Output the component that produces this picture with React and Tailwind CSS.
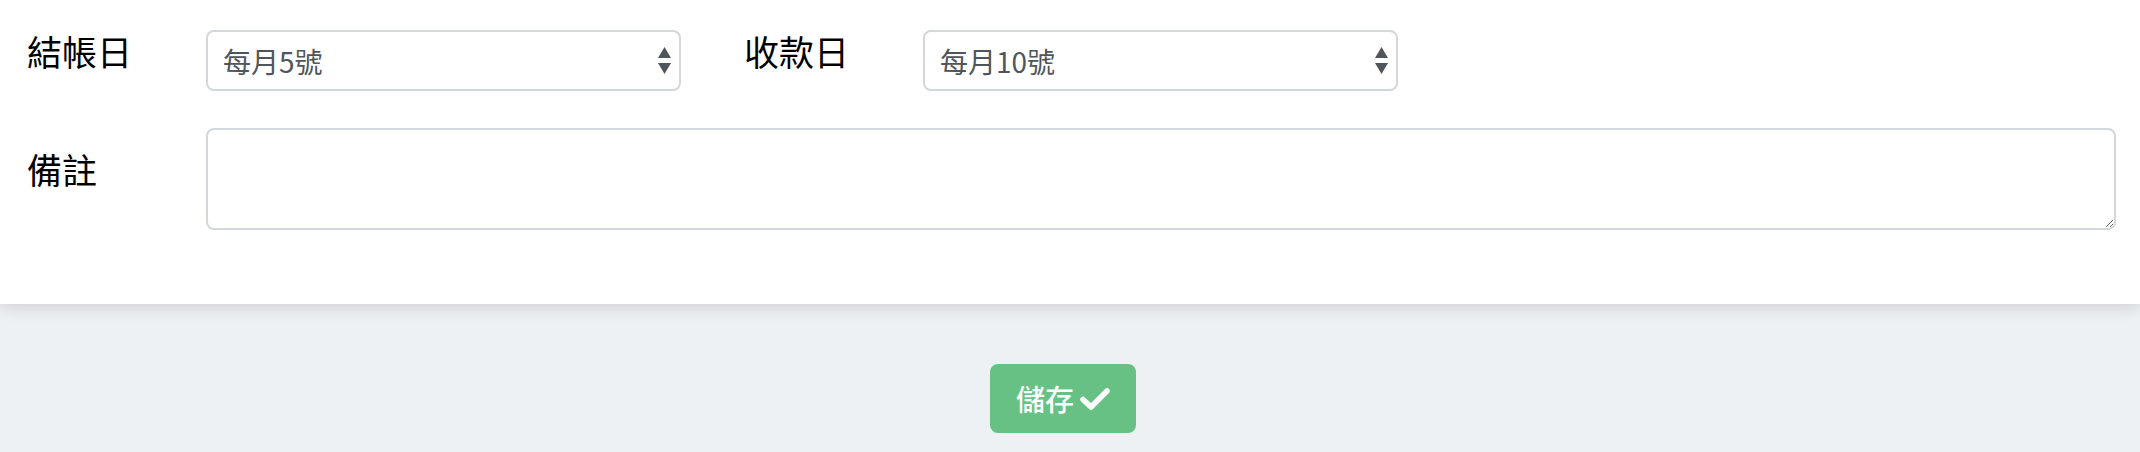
import React, { useState } from "react";

const font = { fontFamily: '"Noto Sans CJK TC", "Noto Sans", sans-serif' };

function SelectBox({ value, options, onChange }) {
  return (
    <div className="relative w-[475px] h-[61px]">
      <select
        value={value}
        onChange={(e) => onChange(e.target.value)}
        className="appearance-none w-full h-full bg-white border-2 border-[#d3d6da] rounded-[8px] pl-[15px] pr-[40px] text-[28px] text-[#50555b] outline-none"
      >
        {options.map((o) => (
          <option key={o} value={o}>
            {o}
          </option>
        ))}
      </select>
      {/* double arrow */}
      <svg
        className="absolute right-[9px] top-[16px] pointer-events-none"
        width="15"
        height="29"
        viewBox="0 0 15 29"
      >
        <path d="M7.5 1 L14 12 L1 12 Z" fill="#50555b" />
        <path d="M7.5 28 L14 17 L1 17 Z" fill="#50555b" />
      </svg>
    </div>
  );
}

export default function App() {
  const [closeDay, setCloseDay] = useState("每月5號");
  const [payDay, setPayDay] = useState("每月10號");
  const [note, setNote] = useState("");

  const days = Array.from({ length: 31 }, (_, i) => `每月${i + 1}號`);

  return (
    <div className="w-[2140px] h-[452px] bg-[#eef1f4] flex flex-col" style={font}>
      <div className="bg-white pt-[30px] pb-[74px] pl-[27px] pr-[24px] shadow-[0_4px_14px_rgba(0,0,0,0.13)] relative z-10">
        <div className="flex items-start">
          <label className="w-[179px] text-[35px] leading-[35px] text-black pt-[3px]">結帳日</label>
          <SelectBox value={closeDay} options={days} onChange={setCloseDay} />
          <label className="ml-[63px] w-[179px] text-[35px] leading-[35px] text-black pt-[3px]">收款日</label>
          <SelectBox value={payDay} options={days} onChange={setPayDay} />
        </div>

        <div className="flex items-start mt-[37px]">
          <label className="w-[179px] text-[35px] leading-[35px] text-black pt-[23px]">備註</label>
          <textarea
            value={note}
            onChange={(e) => setNote(e.target.value)}
            className="w-[1910px] h-[102px] border-2 border-[#d3d6da] rounded-[8px] px-[15px] py-[8px] text-[28px] outline-none"
          />
        </div>
      </div>

      <div className="flex justify-center pt-[60px] pr-[14px]">
        <button className="w-[146px] h-[69px] rounded-[8px] bg-[#67c185] text-white text-[29px] font-medium flex items-center justify-center gap-[6px]">
          儲存
          <svg width="30" height="24" viewBox="0 0 30 24">
            <path
              d="M3 12.5 L11 20 L27 4"
              fill="none"
              stroke="white"
              strokeWidth="5.5"
              strokeLinecap="round"
              strokeLinejoin="round"
            />
          </svg>
        </button>
      </div>
    </div>
  );
}
